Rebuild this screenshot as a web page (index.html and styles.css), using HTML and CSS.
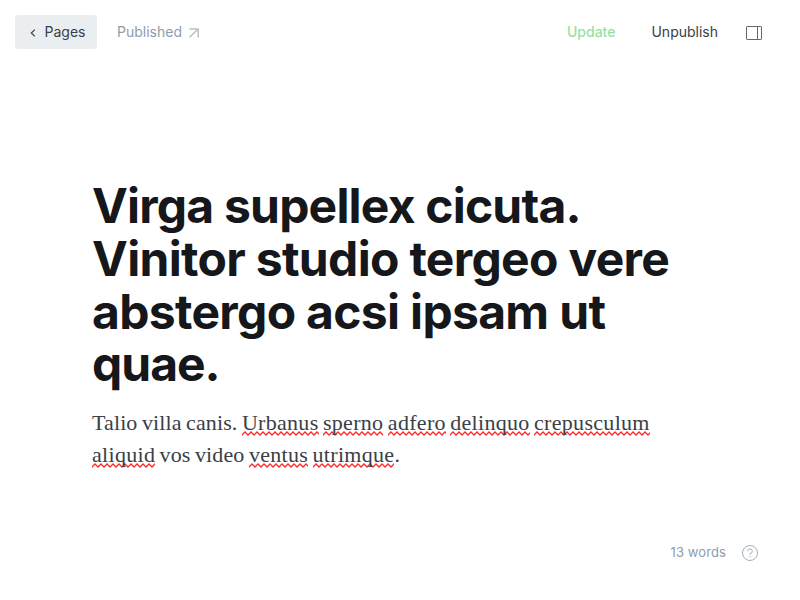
FILE: index.html
```html
<!DOCTYPE html>
<html lang="en">
<head>
<meta charset="utf-8">
<title>Page editor</title>
<link rel="stylesheet" href="styles.css">
</head>
<body>
<div class="editor">
  <header class="toolbar">
    <a class="back"><svg class="chevron" width="6" height="8" viewBox="0 0 6 8"><path d="M4.800.6 1.300 4l3.500 3.400"/></svg><span>Pages</span></a>
    <a class="status"><span>Published</span><svg class="arrow" width="10" height="10" viewBox="0 0 10 10"><path d="M.5 1h8.700v8.500M9.200 1 .5 9.300"/></svg></a>
    <div class="actions">
      <span class="update">Update</span>
      <span class="unpublish">Unpublish</span>
      <svg class="panel" width="16" height="14" viewBox="0 0 16 14"><rect x=".5" y=".5" width="15" height="13" rx=".6"/><path d="M11.500.5v13"/></svg>
    </div>
  </header>
  <main class="content">
    <h1><span class="line opening">Virga supellex cicuta.</span><span class="line">Vinitor studio tergeo vere</span><span class="line">abstergo acsi ipsam ut</span><span class="line closing">quae.</span></h1>
    <p><span class="line">Talio villa canis. <span class="typo">Urbanus</span> <span class="typo">sperno</span> <span class="typo">adfero</span> <span class="typo">delinquo</span> <span class="typo">crepusculum</span></span><span class="line"><span class="typo">aliquid</span> vos video <span class="typo">ventus</span> <span class="typo">utrimque</span>.</span></p>
  </main>
  <footer class="footer">
    <span>13 words</span>
    <svg class="help" width="16" height="16" viewBox="0 0 16 16"><circle cx="8" cy="8" r="7.500"/><path d="M5.700 6.200A2.300 2.300 0 1 1 8 8.500v1.300"/><circle class="dot" cx="8" cy="11.600" r=".7"/></svg>
  </footer>
</div>
</body>
</html>
```

FILE: styles.css
```css
* { box-sizing: border-box; }
body {
  margin: 0;
  background: #fff;
  font-family: Inter, sans-serif;
  font-size: 14px;
  color: #394047;
}
svg { display: block; fill: none; flex: none; }
.editor { display: flex; flex-direction: column; height: 600px; overflow: hidden; }
.toolbar {
  display: flex;
  align-items: center;
  height: 64px;
  padding: 0 38px 0 15px;
}
.toolbar span { padding-bottom: 2px; }
.back {
  display: flex;
  align-items: center;
  gap: 9px;
  width: 82px;
  height: 34px;
  padding-left: 14.5px;
  border-radius: 3px;
  background: #ebeef0;
}
.chevron { stroke: #394047; stroke-width: 1.2; margin-top: 2px; }
.status {
  display: flex;
  align-items: center;
  gap: 7px;
  margin-left: 20px;
  color: #8e9cac;
}
.arrow { stroke: #b5bec8; stroke-width: 1.4; margin-top: 2px; }
.actions { display: flex; align-items: center; margin-left: auto; }
.update { color: #98dfa5; font-weight: 500; margin-right: 36px; }
.unpublish { margin-right: 28px; }
.panel { stroke: #626870; margin-top: 2px; }
.content { flex: 1; padding: 116px 92px 0; }
h1 {
  margin: 0;
  font-size: 48px;
  line-height: 52.8px;
  font-weight: 700;
  letter-spacing: -0.68px;
  color: #15171a;
  white-space: nowrap;
}
.opening { letter-spacing: -0.8px; }
.closing { letter-spacing: -1px; }
p {
  margin: 16px 0 0;
  font-family: Georgia, "Liberation Serif", serif;
  font-size: 22px;
  line-height: 32px;
  letter-spacing: 0.12px;
  word-spacing: -1.2px;
  white-space: nowrap;
}
.line { display: block; }
.typo {
  letter-spacing: 0.3px;
  padding-bottom: 1px;
  background: url("data:image/svg+xml,%3Csvg xmlns='http://www.w3.org/2000/svg' width='6' height='5'%3E%3Cpath d='M-1.500 2.500 0 4 3 1 6 4 7.500 2.500' fill='none' stroke='%23ff2b2b' stroke-width='1.300'/%3E%3C/svg%3E") left bottom / 6px 5px repeat-x;
}
.footer {
  display: flex;
  align-items: center;
  justify-content: flex-end;
  gap: 16px;
  height: 34px;
  margin-bottom: 30px;
  padding-right: 42px;
  font-size: 13px;
  letter-spacing: 0.1px;
  color: #8e9cac;
}
.footer span { padding-bottom: 2px; }
.help { stroke: #a4afbd; }
.dot { fill: #a4afbd; stroke: none; }
```
